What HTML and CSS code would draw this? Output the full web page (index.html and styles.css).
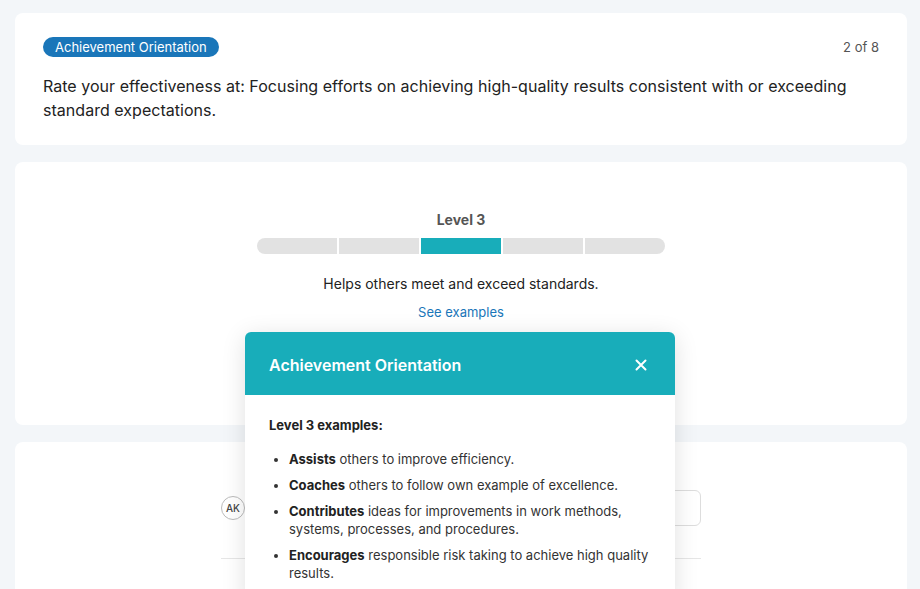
FILE: index.html
```html
<!DOCTYPE html>
<html lang="en">
<head>
    <meta charset="UTF-8">
    <meta name="viewport" content="width=device-width, initial-scale=1.0">
    <title>Self Assessment</title>
    <link rel="stylesheet" href="styles.css">
</head>
<body>

    <div class="page">

        <!-- Question Card -->
        <div class="card question-card">
            <div class="question-top">
                <span class="pill">Achievement Orientation</span>
                <span class="counter">2 of 8</span>
            </div>
            <p class="question-text">Rate your effectiveness at: Focusing efforts on achieving high-quality results consistent with or exceeding standard expectations.</p>
        </div>

        <!-- Rating Card -->
        <div class="card rating-card">
            <div class="level-label">Level 3</div>
            <div class="level-bar">
                <span class="seg"></span>
                <span class="seg"></span>
                <span class="seg active"></span>
                <span class="seg"></span>
                <span class="seg"></span>
            </div>
            <p class="level-desc">Helps others meet and exceed standards.</p>
            <a href="#" class="see-examples">See examples</a>

            <!-- Examples popover -->
            <div class="popover">
                <div class="popover-header">
                    <h2>Achievement Orientation</h2>
                    <button class="close-btn" aria-label="Close">
                        <svg width="12" height="12" viewBox="0 0 12 12"><path d="M1.5 1.5 L10.5 10.5 M10.5 1.5 L1.5 10.5" stroke="#fff" stroke-width="2" stroke-linecap="round"/></svg>
                    </button>
                </div>
                <div class="popover-body">
                    <h3>Level 3 examples:</h3>
                    <ul>
                        <li><b>Assists</b> others to improve efficiency.</li>
                        <li><b>Coaches</b> others to follow own example of excellence.</li>
                        <li><b>Contributes</b> ideas for improvements in work methods, systems, processes, and procedures.</li>
                        <li><b>Encourages</b> responsible risk taking to achieve high quality results.</li>
                    </ul>
                </div>
            </div>
        </div>

        <!-- Comment Card -->
        <div class="card comment-card">
            <div class="comment-inner">
                <div class="comment-row">
                    <div class="avatar">AK</div>
                    <input type="text" class="comment-input">
                </div>
                <div class="divider"></div>
            </div>
        </div>

    </div>

</body>
</html>
```

FILE: styles.css
```css
body {
    font-family: 'Inter', 'Liberation Sans', sans-serif;
    margin: 0;
    padding: 0;
    background-color: #f3f6f9;
    color: #222;
}

.page {
    padding: 13px 13px 0 15px;
    display: flex;
    flex-direction: column;
    gap: 17px;
}

.card {
    background-color: white;
    border-radius: 8px;
}

/* Question Card */
.question-card {
    padding: 24px 28px 22px 28px;
    height: 86px;
}

.question-top {
    display: flex;
    justify-content: space-between;
    align-items: center;
}

.pill {
    background-color: #1a76b9;
    color: white;
    font-size: 13px;
    line-height: 20px;
    padding: 0 12px;
    border-radius: 10px;
}

.counter {
    font-size: 13px;
    color: #555;
}

.question-text {
    margin: 17px 0 0 0;
    font-size: 16px;
    line-height: 24px;
    letter-spacing: 0.03px;
    color: #222;
}

/* Rating Card */
.rating-card {
    position: relative;
    height: 263px;
    box-sizing: border-box;
    padding-top: 48px;
    display: flex;
    flex-direction: column;
    align-items: center;
}

.level-label {
    font-size: 14px;
    font-weight: bold;
    color: #555;
    line-height: 20px;
}

.level-bar {
    margin-top: 8px;
    display: flex;
    gap: 2px;
    width: 408px;
    height: 16px;
    border-radius: 8px;
    overflow: hidden;
}

.level-bar .seg {
    flex: 1;
    background-color: #e2e2e2;
}

.level-bar .seg.active {
    background-color: #18adba;
}

.level-desc {
    margin: 20px 0 0 0;
    font-size: 14px;
    line-height: 20px;
    color: #222;
}

.see-examples {
    margin-top: 9px;
    font-size: 13px;
    line-height: 18px;
    color: #1a76b9;
    text-decoration: none;
}

/* Popover */
.popover {
    position: absolute;
    top: 170px;
    left: 230px;
    width: 430px;
    background-color: white;
    border-radius: 6px;
    box-shadow: 0 4px 24px rgba(0, 0, 0, 0.12);
    z-index: 10;
}

.popover-header {
    background-color: #18adba;
    border-radius: 6px 6px 0 0;
    height: 63px;
    box-sizing: border-box;
    padding: 2px 24px 0 24px;
    display: flex;
    align-items: center;
    justify-content: space-between;
}

.popover-header h2 {
    margin: 0;
    font-size: 16px;
    font-weight: 600;
    color: white;
}

.close-btn {
    background: transparent;
    border: none;
    padding: 4px;
    cursor: pointer;
    display: flex;
}

.popover-body {
    padding: 21px 24px 20px 24px;
}

.popover-body h3 {
    margin: 0;
    font-size: 13px;
    font-weight: bold;
    line-height: 18px;
    color: #222;
}

.popover-body ul {
    margin: 16px 0 0 0;
    padding-left: 20px;
}

.popover-body li {
    font-size: 13px;
    line-height: 18px;
    color: #333;
    margin-bottom: 8px;
}

.popover-body li b {
    color: #222;
}

/* Comment Card */
.comment-card {
    height: 200px;
    display: flex;
    justify-content: center;
}

.comment-inner {
    width: 480px;
    padding-top: 48px;
}

.comment-row {
    display: flex;
    align-items: center;
    gap: 10px;
}

.avatar {
    width: 22px;
    height: 22px;
    border: 1px solid #bbb;
    border-radius: 50%;
    font-size: 10px;
    font-weight: 500;
    color: #444;
    display: flex;
    align-items: center;
    justify-content: center;
    flex-shrink: 0;
}

.comment-input {
    flex: 1;
    height: 36px;
    box-sizing: border-box;
    border: 1px solid #ddd;
    border-radius: 6px;
}

.divider {
    margin-top: 32px;
    border-top: 1px solid #e6e6e6;
}
```
